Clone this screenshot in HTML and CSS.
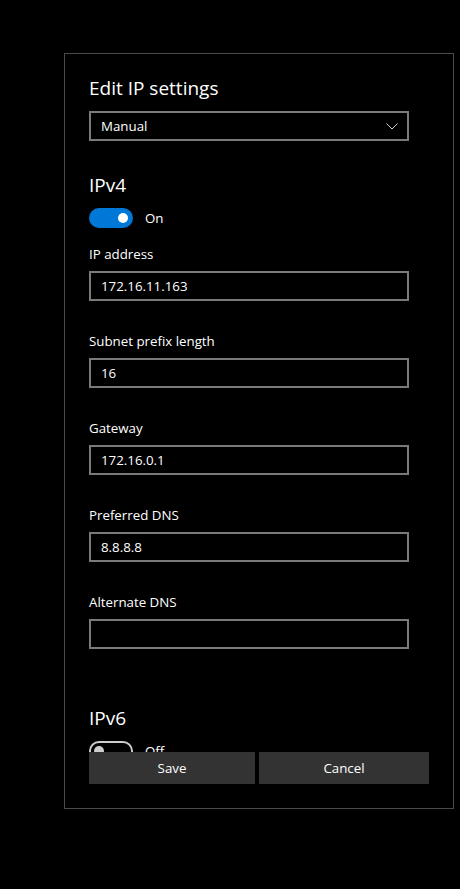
FILE: index.html
```html
<!DOCTYPE html>
<html lang="en">
<head>
<meta charset="utf-8">
<title>Edit IP settings</title>
<link rel="stylesheet" href="styles.css">
</head>
<body>
<div class="dialog">
  <div class="scroll">
    <h1 class="title">Edit IP settings</h1>
    <div class="select">
      <span>Manual</span>
      <svg class="chev" width="12" height="7" viewBox="0 0 12 7"><path d="M0.5 0.5 L6 6 L11.5 0.5" fill="none" stroke="#cfcfcf" stroke-width="1"/></svg>
    </div>

    <h2 class="section">IPv4</h2>
    <div class="toggle-row">
      <span class="toggle on"><span class="knob"></span></span>
      <span class="toggle-label">On</span>
    </div>

    <div class="field first">
      <label class="label">IP address</label>
      <div class="input">172.16.11.163</div>
    </div>
    <div class="field">
      <label class="label">Subnet prefix length</label>
      <div class="input">16</div>
    </div>
    <div class="field">
      <label class="label">Gateway</label>
      <div class="input">172.16.0.1</div>
    </div>
    <div class="field">
      <label class="label">Preferred DNS</label>
      <div class="input">8.8.8.8</div>
    </div>
    <div class="field">
      <label class="label">Alternate DNS</label>
      <div class="input"></div>
    </div>

    <h2 class="section v6">IPv6</h2>
    <div class="toggle-row">
      <span class="toggle off"><span class="knob"></span></span>
      <span class="toggle-label">Off</span>
    </div>
  </div>
  <div class="buttons">
    <button class="btn">Save</button>
    <button class="btn">Cancel</button>
  </div>
</div>
</body>
</html>
```

FILE: styles.css
```css
html, body {
  margin: 0;
  padding: 0;
  background: #000;
  color: #fff;
  font-family: "Open Sans", "Noto Sans", sans-serif;
}
body {
  width: 460px;
  height: 889px;
  overflow: hidden;
}
.dialog {
  margin: 53px 0 0 64px;
  width: 388px;
  height: 754px;
  border: 1px solid #4a4a4a;
  display: flex;
  flex-direction: column;
}
.scroll {
  flex: 1;
  overflow: hidden;
  padding: 20px 44px 0 24px;
  min-height: 0;
}
.title {
  margin: 0;
  font-size: 19px;
  font-weight: 400;
  line-height: 28px;
}
.select {
  margin-top: 9px;
  height: 26px;
  border: 2px solid #7a7a7a;
  display: flex;
  align-items: center;
  justify-content: space-between;
  padding: 0 9px 0 10px;
  font-size: 13.3px;
}
.section {
  margin: 30px 0 0;
  font-size: 19px;
  font-weight: 400;
  line-height: 28px;
}
.section.v6 { margin-top: 55px; }
.toggle-row {
  margin-top: 9px;
  display: flex;
  align-items: center;
  height: 20px;
}
.toggle {
  box-sizing: border-box;
  width: 44px;
  height: 20px;
  border-radius: 10px;
  display: flex;
  align-items: center;
  padding: 0 5px;
}
.toggle.on {
  background: #0078d7;
  justify-content: flex-end;
}
.toggle.off {
  border: 2px solid #cccccc;
  padding: 0 3px;
}
.knob {
  width: 10px;
  height: 10px;
  border-radius: 50%;
  background: #fff;
}
.toggle.off .knob { background: #cccccc; }
.toggle-label {
  margin-left: 12px;
  font-size: 13.3px;
}
.field { margin-top: 30px; }
.field.first { margin-top: 16px; }
.label {
  display: block;
  font-size: 13.3px;
  line-height: 20px;
}
.input {
  margin-top: 7px;
  height: 26px;
  border: 2px solid #7a7a7a;
  padding: 0 10px;
  font-size: 13.3px;
  line-height: 26px;
}
.buttons {
  display: grid;
  grid-template-columns: 166px 170px;
  gap: 4px;
  padding: 0 0 24px 24px;
}
.btn {
  height: 32px;
  border: 0;
  background: #333333;
  color: #fff;
  font-family: inherit;
  font-size: 13.3px;
  padding: 0;
}
```
